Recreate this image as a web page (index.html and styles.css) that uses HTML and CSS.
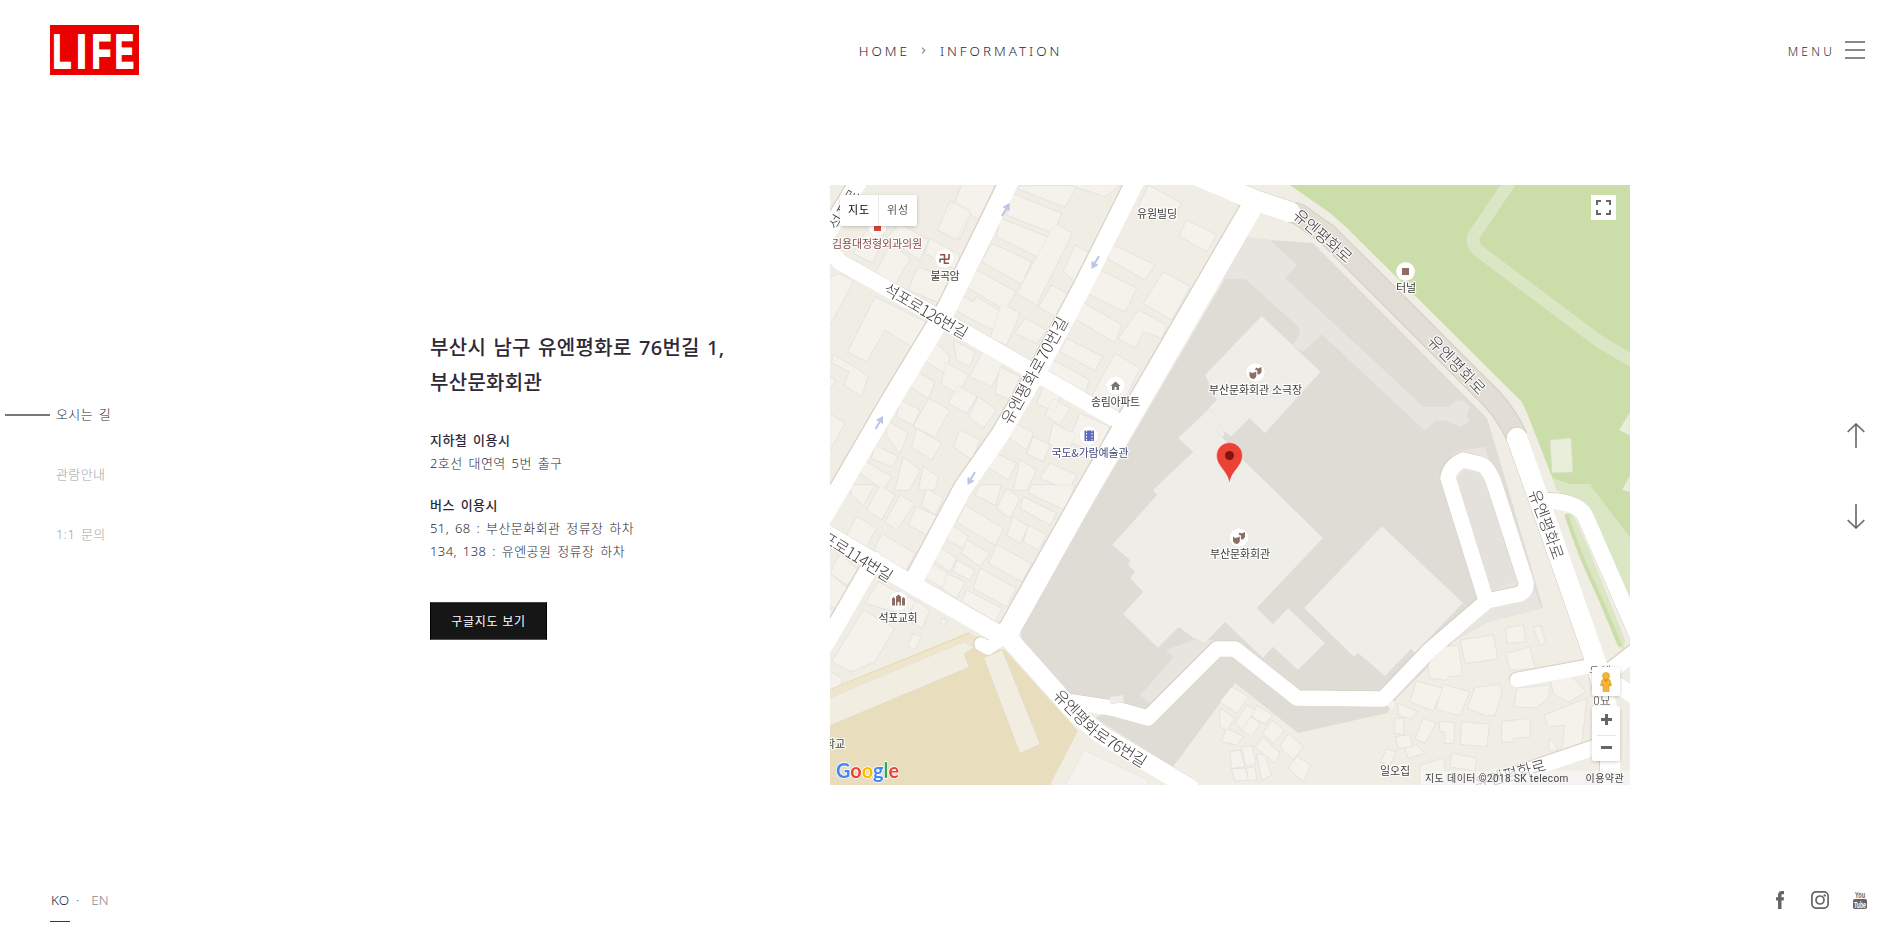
FILE: index.html
```html
<!DOCTYPE html>
<html lang="ko">
<head>
<meta charset="utf-8">
<title>LIFE - Information</title>
<link rel="stylesheet" href="styles.css">
</head>
<body>
<div class="page">
  <header class="header">
    <a class="logo" aria-label="LIFE">
      <svg width="89" height="50" viewBox="0 0 89 50"><rect width="89" height="50" fill="#eb0000"/>
        <g class="logo-text"><text transform="translate(2.800 42.500) scale(.63 1)">L</text><text transform="translate(26.600 42.500) scale(.75 1)">I</text><text transform="translate(41.800 42.500) scale(.66 1)">F</text><text transform="translate(65 42.500) scale(.590 1)">E</text></g></svg>
    </a>
    <nav class="crumbs"><span>HOME</span><svg class="crumb-sep" width="5" height="7" viewBox="0 0 5 7"><path d="M1 .7 3.8 3.5 1 6.3" fill="none" stroke="#888" stroke-width="1.1"/></svg><span>INFORMATION</span></nav>
    <div class="menu"><span>MENU</span><i class="burger"></i></div>
  </header>

  <main class="main">
    <nav class="side">
      <a class="side-item active">오시는 길</a>
      <a class="side-item">관람안내</a>
      <a class="side-item">1:1 문의</a>
    </nav>

    <section class="info">
      <h1>부산시 남구 유엔평화로 76번길 1,<br>부산문화회관</h1>
      <h2>지하철 이용시</h2>
      <p>2호선 대연역 5번 출구</p>
      <h2 class="gap">버스 이용시</h2>
      <p>51, 68 : 부산문화회관 정류장 하차</p>
      <p>134, 138 : 유엔공원 정류장 하차</p>
      <a class="button">구글지도 보기</a>
    </section>

    <section class="map">
      <svg class="map-canvas" viewBox="830 185 800 600" width="800" height="600">
        <defs>
          <g id="roads">
            <path stroke-width="17" d="M862 176 822 242"/>
            <path stroke-width="16" d="M822 244 840 262 943 320 1013 360 1113 418"/>
            <path stroke-width="19" d="M1012 176 947 308 890 402 840 488 815 530"/>
            <path stroke-width="18" d="M1138 176 1083 286 1037 372 1000 435 963 488 913 582"/>
            <path stroke-width="18" d="M820 530 913 585 1003 637"/>
            <path stroke-width="17" d="M874 560 825 645"/>
            <path stroke-width="21" d="M1252 207 1220 262 1090 486 1008 632"/>
            <path stroke-width="20" d="M1198 176 1257 201 1290 212"/>
            <path stroke-width="18" d="M1003 632 1076 714 1100 734 1190 788"/>
            <path stroke-width="15" d="M1072 702 1112 708 1148 718 1217 649 1235 649 1297 698 1383 699 1430 650 1487 601 1520 594Q1527 590 1526 582L1495 486Q1489 467 1480 464L1463 460Q1450 466 1448 478L1486 600"/>
            <path stroke-width="20" d="M1517 438 1535 488 1597 665 1610 720V795"/>
            <path stroke-width="16" d="M1548 501Q1580 502 1586 518L1636 632"/>
            <path stroke-width="14" d="M1517 680 1597 665"/>
            <path stroke-width="16" d="M1604 676 1640 648M1604 676 1640 700"/>
            <path stroke-width="15" d="M1470 790 1605 744"/>
            <path stroke-width="13" d="M981 644 988 648 1000 640"/>
          </g>
        </defs>

        <rect x="830" y="185" width="800" height="600" fill="#f0ede5"/>

        <g class="park">
          <path fill="#cbdda8" d="M1290 185 1330 213 1347 228 1522 402 1527 413 1556 487 1580 505 1640 650V180H1290z"/>
          <path fill="#dbe7c4" d="M1553 478 1570 484H1592L1630 537V625L1590 515 1573 500 1556 490z"/>
          <path fill="#cbdda8" d="M1590 485 1630 537V485z"/>
          <path fill="none" stroke="#dbe7c4" stroke-width="12.5" d="M1513 178 1474 235Q1470 244 1480 252L1600 342 1636 363"/>
          <path fill="#e9eedb" stroke="#dbdcc8" stroke-width=".7" d="M1550 440 1571 438 1573 472 1552 473zM1619 430 1630 412V436zM1622 490 1630 475V492z"/>
          <path fill="#dbe7c4" d="M1564 515 1572 512 1590 552 1625 640 1624 650 1617 645z"/>
          <path fill="none" stroke="#cbdda8" stroke-width="4" stroke-linecap="round" d="M1567 516Q1578 552 1601 600L1620 645"/>
        </g>

        <g class="school">
          <path fill="#eee5cc" d="M825 692 966 633 984 638 990 650 825 702z"/>
          <path fill="#e8ddbd" d="M825 706 975 643 1005 650 1078 731 1050 785H825z"/>
          <path fill="none" stroke="#e2d3a8" stroke-width=".8" d="M828 690 970 633"/>
          <path class="tan-house" d="M826 700 858 686 964 642 974 647 964 654 969 667 826 727zM984 658 1002 650 1040 744 1020 753z"/>
        </g>

        <g class="complex">
          <path fill="#dfdbd5" d="M1245 237 1230 270 1102 488 1020 628 1022 640 1067 693 1120 706 1095 718 1173 767 1235 683 1298 733 1387 713 1397 698 1453 642 1487 622 1543 608 1507 485 1487 418 1313 243 1270 240z"/>
          <g transform="translate(1220 180) scale(.33333)">
            <path fill="#e8e5e0" d="M75 170 150 180 230 255 195 295 610 680H690Q715 640 748 680L740 710 750 725 720 740 680 722H645L615 752 305 463 250 515 215 495Q255 460 230 435L75 297 10 297 0 300zM700 815 795 800 810 850zM665 880 700 820 790 830 965 1285 800 1325 690 1390 800 1240z"/>
            <path fill="#dfdbd5" d="M690 915 735 870 780 880 900 1200 815 1230z" opacity=".5"/>
            <path class="hall" d="M125 407 302 575 135 760 88 715 33 770 0 745-55 800-120 775-10 660-45 585z"/>
          </g>
          <path fill="#e8e5e0" d="M1166 650 1193 640 1220 640 1226 650 1160 712 1140 695 1173 658z"/>
          <path class="hall" d="M1178 438 1202 460 1225 434 1210 408z"/>
          <path class="hall" d="M1216 430 1240 457 1272 488 1323 538 1257 608 1273 624 1288 608 1325 643 1298 670 1273 647 1263 658 1225 622 1205 643 1193 638 1179 627 1158 648 1123 614 1143 592 1130 578 1135 572 1128 565 1130 560 1112 545 1157 495 1153 490z"/>
          <path class="hall" d="M1382 526 1463 603 1415 653 1411 649 1385 676 1358 653 1354 657 1304 608z"/>
        </g>

        <g class="houses">
          <g transform="translate(820 180) scale(.33333)">
            <path d="M425 15H525L475 120 405 65zM405 65 455 95 420 175 350 150zM390 65 450 90 410 180 352 150z"/>
            <path d="M240 130 325 180 300 240 200 175zM140 150 190 165 160 250 100 220zM330 175 420 225 410 270 315 220zM215 190 270 235 225 315 165 280zM295 260 390 300 360 370 265 330z"/>
            <path d="M30 290 60 280 100 305 30 435zM165 350 325 430 275 500 195 450 140 545 83 515zM40 525 110 565 145 590 125 650 72 615 88 575 35 548zM30 590 48 600 30 630zM30 700 75 730 30 810z"/>
            <path d="M600 18H770L735 82 590 25zM575 40 725 100 700 160 560 105zM540 115 682 170 660 235 530 170zM515 190 635 245 605 312 485 245zM470 270 588 335 555 390 440 320zM430 350 460 365 470 350 550 400 520 450 440 410 400 385z"/>
            <path d="M705 130 757 160 650 375 590 340zM765 195 820 225 770 310 730 275zM695 315 750 345 715 415 655 380zM615 415 680 450 650 490 585 460zM545 370 600 400 560 495 510 475z"/>
            <path d="M985 15 1085 70 1050 125 955 80zM1100 120 1190 165 1160 215 1078 168zM880 195 1005 255 975 300 862 235zM830 265 950 325 915 395 800 340zM1030 275 1110 320 1055 420 970 370zM785 365 905 435 885 488 762 415zM955 390 1040 435 1025 475 970 455 945 505 895 475zM740 475 848 530 825 572 720 515zM700 540 808 600 795 640 680 575zM885 520 960 565 895 695 815 650zM780 700 870 740 830 820 745 785zM750 15H900L855 50z"/>
            <path d="M340 480 390 530 375 580 310 540zM290 575 345 605 325 655 262 615zM400 480 465 515 450 560 410 540zM375 545 445 585 415 640 365 615zM495 500 555 540 515 620 450 590zM540 560 600 590 570 660 525 640zM325 655 390 690 345 770 280 740zM240 660 300 690 280 735 230 710zM415 615 470 650 440 700 385 670zM475 650 530 690 490 745 445 710zM200 720 265 760 240 820 200 770zM290 745 365 790 335 840 275 800zM420 750 480 780 455 840 400 800zM165 795 235 830 215 860 155 835zM130 840 215 890 190 930 120 880zM250 830 300 870 270 930H225zM310 860 355 890 345 930H295z"/>
            <path d="M670 620 720 650 705 695 650 670zM700 655 750 685 720 735 675 705zM570 720 640 760 620 810 555 765zM640 770 690 795 670 845 620 820zM700 730 770 765 740 820 685 790zM520 815 590 850 565 900 500 860zM600 840 650 870 620 930H580zM690 850 770 885 745 930 660 895z"/>
          </g>
          <g transform="translate(820 485) scale(.33333)">
            <path d="M90 0H165L130 60 95 30zM180 0 225 30 185 105 140 75zM240 30 285 55 230 135 195 110zM320 10 370 40 345 90 305 60zM290 65 355 95 320 150 265 120zM110 95 170 130 130 200 75 160zM185 145 285 205 255 260 160 200zM60 205 120 260 80 300 30 265zM30 265 95 320 60 380 30 360zM30 370 60 390 30 440z"/>
            <path d="M480 0H545L525 60 465 30zM560 10 600 40 570 100 530 70zM635 0H765L735 75 625 25zM610 35 710 85 690 120 600 70zM435 60 550 130 525 180 410 110zM580 95 625 125 600 175 560 150zM625 120 680 150 655 195 610 170zM395 120 445 155 430 190 380 165zM440 165 510 205 480 245 425 205zM530 180 635 235 605 290 505 235zM355 185 410 220 390 260 340 225zM410 225 465 255 450 285 400 260zM480 250 588 310 560 365 460 310zM335 235 385 265 370 310 310 275zM380 265 435 290 410 340 365 310zM440 315 545 370 525 410 425 350z"/>
            <path d="M175 290 290 350 260 390 135 355zM285 345 330 375 305 430 265 405zM365 400 380 405 375 420 360 412zM130 375 223 430 165 530 95 560 35 530zM280 445 303 455 285 493 262 485zM30 560 68 580 62 600 30 612z"/>
          </g>
          <g transform="translate(1220 485) scale(.33333)">
            <path d="M35 605 85 635 50 685 0 650zM80 660 105 675 70 735 45 715zM0 670 45 700 20 735 0 725zM20 730 70 755 50 780 5 770zM90 695 122 715 95 755 62 735zM110 662 158 690 135 718 95 695zM155 705 192 735 160 775 128 745zM205 745 250 785 220 825 180 785zM130 758 180 805 165 835 105 785zM230 815 272 840 250 890 205 850zM30 800 60 795 75 845 35 850zM65 785 95 782 108 835 78 845zM110 808 135 810 155 870 125 885zM35 852 75 850 85 885 45 888zM80 850 105 845 110 885H85z"/>
            <path d="M650 490 715 480 727 570 685 575 678 585 630 580 625 540zM722 465 820 450 833 520 790 528 735 535zM857 430 910 420 917 470 862 475zM940 425 962 422 977 475 960 480zM858 505 930 487 945 550 870 555zM590 588 668 610 640 678 570 650zM670 598 748 620 720 692 648 672zM765 608 840 598 845 625 825 690 800 693 742 670zM890 610 990 600 985 640 950 668 882 665zM990 575 1045 565 1098 620 1045 652 1000 625zM972 690 1100 640 1085 780 1025 795 1035 720 985 725zM535 655 592 680 572 702 535 690zM525 700 550 700 552 748 525 745zM610 700 648 715 615 775 585 760zM658 710 702 712V775H675V740H660zM725 710 808 718 800 785 722 778zM845 710 930 700V755L880 760V770L845 772zM527 755 570 750 578 785 535 790zM555 790 590 780 615 805 565 820zM500 792 528 800 510 840 482 830zM695 805 770 820 765 858 690 845zM600 840 672 820 680 900H600zM990 760 1015 795H985zM500 660 520 645 530 660 515 678z"/>
            <path d="M1225 710 1235 705V760L1225 765z"/>
          </g>
        </g>
        <path fill="#f3f2ec" stroke="#e6e4dd" stroke-width=".7" d="M1084 750 1148 780V787H1064L1073 772z"/>

        <path class="tunnel-case" d="M1292 212 1300 215 1328 235 1420 327 1493 400Q1508 417 1517 437"/>
        <path class="tunnel" d="M1292 212 1300 215 1328 235 1420 327 1493 400Q1508 417 1517 437"/>
        <use href="#roads" class="road-case"/>
        <use href="#roads" class="road"/>
        <path class="hall" d="M1109 697 1123 695 1124 702 1111 704z"/>

        <g class="oneway">
          <path transform="translate(1005.500 210) rotate(-60)" d="M-7 0H5M1-3 6 0 1 3"/>
          <path transform="translate(1095.500 262) rotate(120)" d="M-7 0H5M1-3 6 0 1 3"/>
          <path transform="translate(879 423) rotate(-60)" d="M-7 0H5M1-3 6 0 1 3"/>
          <path transform="translate(971.500 478) rotate(120)" d="M-7 0H5M1-3 6 0 1 3"/>
        </g>

        <g class="street">
          <text transform="translate(843 209) rotate(-60)" textLength="44">석포로</text>
          <text transform="translate(926.500 310) rotate(30)" textLength="94">석포로126번길</text>
          <text transform="translate(1033.500 370) rotate(-61)" textLength="120">유엔평화로70번길</text>
          <text transform="translate(852 552) rotate(32)" textLength="94">석포로114번길</text>
          <path id="s76" d="M1056 690 1091 726Q1099 733 1112 741L1170 777" fill="none"/>
          <text class="along"><textPath href="#s76" startOffset="2" textLength="114">유엔평화로76번길</textPath></text>
          <text transform="translate(1323.500 235) rotate(41)" textLength="72">유엔평화로</text>
          <text transform="translate(1457.500 364) rotate(46)" textLength="75">유엔평화로</text>
          <text transform="translate(1547.500 524) rotate(70)" textLength="73">유엔평화로</text>
          <text transform="translate(1510 773) rotate(-15)" textLength="73">유엔평화로</text>
          <text class="small" x="1600" y="670">유엔</text>
          <text class="small" x="1602" y="699">0묘</text>
        </g>

        <g class="poi">
          <g class="disc"><circle cx="877.500" cy="226" r="9.500"/><circle cx="944.500" cy="258.500" r="9.500"/><circle cx="1115.500" cy="385.500" r="9.500"/><circle cx="1089" cy="435.500" r="9.500"/><circle cx="1255.500" cy="372.500" r="9.500"/><circle cx="1239" cy="537.500" r="9.500"/><circle cx="1405.500" cy="271.500" r="9.500"/><circle cx="898.500" cy="601" r="9.500"/></g>
          <path fill="#db4437" d="M874 224h7v7h-7z"/>
          <path fill="none" stroke="#8d534b" stroke-width="1.600" d="M940 254.800h4.500v4.500h4.500M940 262.500v-3.200h4.500v4h4.500M949 254v5.300"/>
          <path fill="#757575" d="M1110.500 386 1115.500 381.500 1120.500 386H1119V390H1116.500V387H1114.500V390H1112V386z"/>
          <path fill="#5c6bc0" d="M1084.500 430.500h9.500v10.500h-9.500z"/><path stroke="#fff" stroke-width="1" stroke-dasharray="1.500 1.500" d="M1086.500 430v12M1092 430v12"/>
          <path id="masks" fill="#8d6e63" d="M1249.500 371.500 1251.500 373 1254 372.500 1256.300 371.500V376Q1255.500 379 1253 379 1250 378.500 1249.500 376zM1256 367.500 1258 368.500 1261.500 367V372Q1260 375 1257.500 374.500L1257.300 370.300 1255 370z"/>
          <use href="#masks" x="-16.500" y="165"/>
          <path fill="#8d6e63" d="M1402 268h7v7h-7zM892 598.500 893.500 597 895 598.500V605.500H892zM896 596.500 898.500 594.500 901 596.500V605.500H899.500V602H897.500V605.500H896zM902 598.500 903.500 597 905 598.500V605.500H902z"/>
          <text class="red" x="877" y="242.500" textLength="90">김용대정형외과의원</text>
          <text x="945" y="274.500" textLength="29">불곡암</text>
          <text x="1157" y="212.500" textLength="40">유원빌딩</text>
          <text x="1115.500" y="400.500" textLength="49">송림아파트</text>
          <text class="blue" x="1090" y="452" textLength="77">국도&amp;가람예술관</text>
          <text x="1255.500" y="388.500" textLength="93">부산문화회관 소극장</text>
          <text x="1240" y="552.500" textLength="60">부산문화회관</text>
          <text x="1406" y="286.500" textLength="20">터널</text>
          <text x="898" y="616.500" textLength="39">석포교회</text>
          <text x="1395" y="769.500" textLength="30">일오집</text>
          <text x="830" y="742.500" textLength="30">대학교</text>
        </g>

        <path fill="#ea4335" stroke="#fff" stroke-opacity=".6" stroke-width=".8" d="M1229.500 484.500C1228.500 471 1216.500 467 1216.500 455.500A13 13 0 0 1 1242.500 455.500C1242.500 467 1230.500 471 1229.500 484.500z"/>
        <circle cx="1229.500" cy="455.500" r="4.500" fill="#811411"/>

        <text class="google" x="836" y="778" textLength="63" lengthAdjust="spacingAndGlyphs"><tspan fill="#4285f4">G</tspan><tspan fill="#ea4335">o</tspan><tspan fill="#fbbc05">o</tspan><tspan fill="#4285f4">g</tspan><tspan fill="#34a853">l</tspan><tspan fill="#ea4335">e</tspan></text>
      </svg>

      <div class="map-type"><span class="on">지도</span><span>위성</span></div>
      <div class="fullscreen"><svg width="15" height="15" viewBox="0 0 15 15"><path fill="none" stroke="#666" stroke-width="2" d="M1 5V1h4M10 1h4v4M14 10v4h-4M5 14H1v-4"/></svg></div>
      <div class="pegman"><svg width="12" height="20" viewBox="0 0 12 20"><g fill="#fbb62d" stroke="#b9861f" stroke-width=".5"><path d="M2 8Q6 6 10 8L11.500 13.500 9.800 14 9 12V19.500H6.500V15H5.500V19.500H3V12L2.200 14 .5 13.500z"/><circle cx="6" cy="4" r="3.500"/></g><path fill="#e58b24" d="M4 8h4L6 10.500z"/></svg></div>
      <div class="zoom"><i class="plus"></i><hr><i class="minus"></i></div>
      <div class="credit"><span>지도 데이터 ©2018 SK telecom</span><span>이용약관</span></div>
    </section>

    <div class="arrows">
      <svg width="18" height="26" viewBox="0 0 18 26"><path d="M9 25V1M.7 9 9 1l8.300 8"/></svg>
      <svg width="18" height="26" viewBox="0 0 18 26"><path d="M9 1v24M.7 17 9 25l8.300-8"/></svg>
    </div>
  </main>

  <footer class="footer">
    <div class="lang"><a class="ko">KO</a><i>·</i><a class="en">EN</a></div>
    <div class="social">
      <svg width="8" height="18" viewBox="0 0 8 18"><path fill="#666" d="M2 18V9.500H0V6.300H2V4.200C2 1.500 3.500 0 6 0H8V3.200H6.700C5.800 3.200 5.500 3.600 5.500 4.400V6.300H8L7.700 9.500H5.500V18z"/></svg>
      <svg width="18" height="18" viewBox="0 0 18 18"><g fill="none" stroke="#666" stroke-width="1.700"><rect x=".9" y=".9" width="16.200" height="16.200" rx="4"/><circle cx="9" cy="9" r="4"/></g><circle cx="13.700" cy="4.400" r="1.200" fill="#666"/></svg>
      <svg class="yt" width="14" height="18" viewBox="0 0 14 18"><text x="2" y="7" textLength="10" lengthAdjust="spacingAndGlyphs" fill="#666">You</text><rect y="8" width="14" height="10" rx="1.800" fill="#666"/><text x="1" y="16.600" textLength="12" lengthAdjust="spacingAndGlyphs" fill="#fff">Tube</text></svg>
    </div>
  </footer>
</div>
</body>
</html>
```
FILE: styles.css
```css
* { box-sizing: border-box; }
body {
  margin: 0;
  background: #fff;
  color: #2e2937;
  font-family: "Noto Sans", "Noto Sans CJK KR", sans-serif;
}
.page {
  display: grid;
  grid-template-rows: 100px 1fr 98px;
  height: 949px;
  overflow: hidden;
}

/* header */
.header {
  display: grid;
  grid-template-columns: 1fr auto 1fr;
  align-items: start;
  padding: 25px 38px 0 50px;
}
.logo, .logo svg { display: block; overflow: visible; }
.logo-text { font: bold 48px/1 "Liberation Sans", sans-serif; fill: #fff; stroke: #fff; stroke-width: 2px; }
.crumbs, .menu {
  display: flex;
  align-items: center;
  font-weight: 300;
}
.crumbs { font-size: 13.5px; letter-spacing: 2.95px; height: 51px; padding-left: 6px; }
.crumb-sep { margin: 0 14px 0 11px; }
.menu { justify-content: flex-end; height: 52px; font-size: 12px; letter-spacing: 3.2px; }
.burger {
  width: 20px;
  height: 18px;
  margin: -3px 0 0 10px;
  border-top: 2px solid #888;
  border-bottom: 2px solid #888;
  background: linear-gradient(#888, #888) 0 6px / 100% 2px no-repeat;
}

/* content */
.main { display: grid; grid-template-columns: 430px 400px 800px 1fr; align-items: start; }
.side { display: flex; flex-direction: column; gap: 36px; padding: 302px 0 0 56px; font-size: 13px; line-height: 24px; font-weight: 300; letter-spacing: .4px; word-spacing: 2px; }
.side-item { position: relative; color: #a4a4a4; }
.side-item.active { color: #2e2937; }
.side-item.active::before {
  content: "";
  position: absolute;
  left: -51px;
  top: 12px;
  width: 45px;
  height: 2px;
  background: #777;
}
.info { padding-top: 230px; font-size: 13px; line-height: 23px; letter-spacing: .45px; word-spacing: 2px; }
.info h1 { margin: 0 0 29px; font-size: 20px; line-height: 35px; font-weight: 500; letter-spacing: .3px; word-spacing: 1.8px; white-space: nowrap; }
.info h2 { margin: 0; font-size: 13px; font-weight: 500; }
.info h2.gap { margin-top: 19px; }
.info p { margin: 0; font-weight: 300; }
.button {
  display: block;
  width: 117px;
  height: 38px;
  margin-top: 39px;
  border: 1px solid #000;
  border-top-color: #444;
  border-bottom-color: #555;
  background: #161616;
  color: #fff;
  font-size: 12px;
  line-height: 37px;
  text-align: center;
  letter-spacing: .7px;
  word-spacing: 0;
}

/* map */
.map { position: relative; width: 800px; height: 600px; margin-top: 85px; overflow: hidden; }
.map-canvas { display: block; }
.hall { fill: #efede8; filter: drop-shadow(.8px .8px 0 #cfcfdb); }
.tan-house { fill: #f1ede0; filter: drop-shadow(.8px .8px 0 #c9c8d2); }
.houses { fill: #f4f2eb; stroke: #e6e3dc; stroke-width: 1.5; filter: drop-shadow(.8px .5px 0 #d0d1df); }
.tunnel-case, .tunnel { fill: none; stroke: #d3cec4; stroke-width: 22px; }
.tunnel { stroke: #e2ded6; stroke-width: 20px; }
.road, .road-case { fill: none; stroke: #fff; stroke-linecap: round; stroke-linejoin: round; }
.road-case { filter: drop-shadow(.9px .6px 0 #d3cec2) drop-shadow(-.7px -.6px 0 #d9d5ca); }
.oneway { fill: none; stroke: #bcc3ea; stroke-width: 2; }
.street text, .poi text {
  font-family: "Noto Sans CJK KR", sans-serif;
  text-anchor: middle;
  dominant-baseline: central;
  fill: #3c3c3c;
  paint-order: stroke;
  stroke: #fff;
  stroke-opacity: .85;
  stroke-width: 2.5px;
  stroke-linejoin: round;
}
.street text { font-size: 16px; font-weight: 300; }
.street text.along { text-anchor: start; }
.street text.small { font-size: 12px; }
.poi text { font-size: 11px; }
.poi text.red { fill: #844a48; }
.poi text.blue { fill: #45477f; }
.disc { fill: #fff; filter: drop-shadow(0 .7px .5px #0003); }
.google { font: 700 20px Lato, sans-serif; paint-order: stroke; stroke: #fff; stroke-width: 1.5px; }
.map-type, .fullscreen, .pegman, .zoom, .credit { position: absolute; background: #fff; }
.map-type {
  left: 10px;
  top: 10px;
  display: flex;
  border-radius: 2px;
  box-shadow: 0 1px 4px -1px #0005;
  font: 11px/32px Roboto, "Noto Sans CJK KR", sans-serif;
  height: 31px;
  color: #565656;
}
.map-type span { width: 38px; text-align: center; letter-spacing: 1px; }
.map-type .on { width: 39px; color: #000; border-right: 1px solid #e8e8e8; }
.fullscreen { right: 14px; top: 10px; width: 25px; height: 25px; display: grid; place-items: center; }
.pegman, .zoom { right: 10px; width: 28px; border-radius: 2px; box-shadow: 0 1px 4px -1px #0005; }
.pegman { top: 482px; height: 29px; display: grid; place-items: center; }
.zoom { top: 521px; height: 55px; display: flex; flex-direction: column; align-items: center; justify-content: space-between; padding: 8px 0 12px; }
.zoom hr { width: 19px; height: 1px; margin: 0; border: 0; background: #e6e6e6; }
.plus { width: 11px; height: 11px; background: linear-gradient(#666, #666) 50% / 11px 3px no-repeat, linear-gradient(#666, #666) 50% / 3px 11px no-repeat; }
.minus { width: 11px; height: 3px; background: #666; }
.credit {
  right: 0;
  bottom: 0;
  width: 210px;
  height: 14px;
  padding: 0 6px 0 5px;
  display: flex;
  justify-content: space-between;
  background: #f5f5f5b8;
  color: #444;
  font: 10px/15px Roboto, "Noto Sans CJK KR", sans-serif;
  letter-spacing: .4px;
  white-space: nowrap;
}

.arrows { display: flex; flex-direction: column; gap: 54px; padding: 323px 0 0 217px; }
.arrows path { fill: none; stroke: #666; stroke-width: 1.6; }

/* footer */
.footer { display: flex; justify-content: space-between; align-items: flex-start; padding: 37px 36px 0 50px; }
.lang { display: flex; font-size: 13.500px; line-height: 26px; font-weight: 300; margin-top: -1px; }
.lang i { font-style: normal; margin: 0 12px 0 6px; }
.lang .ko { height: 35px; border-bottom: 1px solid #3b3644; width: 20px; text-align: center; }
.lang .en { color: #888; }
.social { display: flex; gap: 27px; margin-top: 3px; }
.social svg { display: block; }
.social svg:last-child { margin-left: -3px; }
.yt text { font: bold 9.500px/1 "Liberation Sans", sans-serif; }
```
